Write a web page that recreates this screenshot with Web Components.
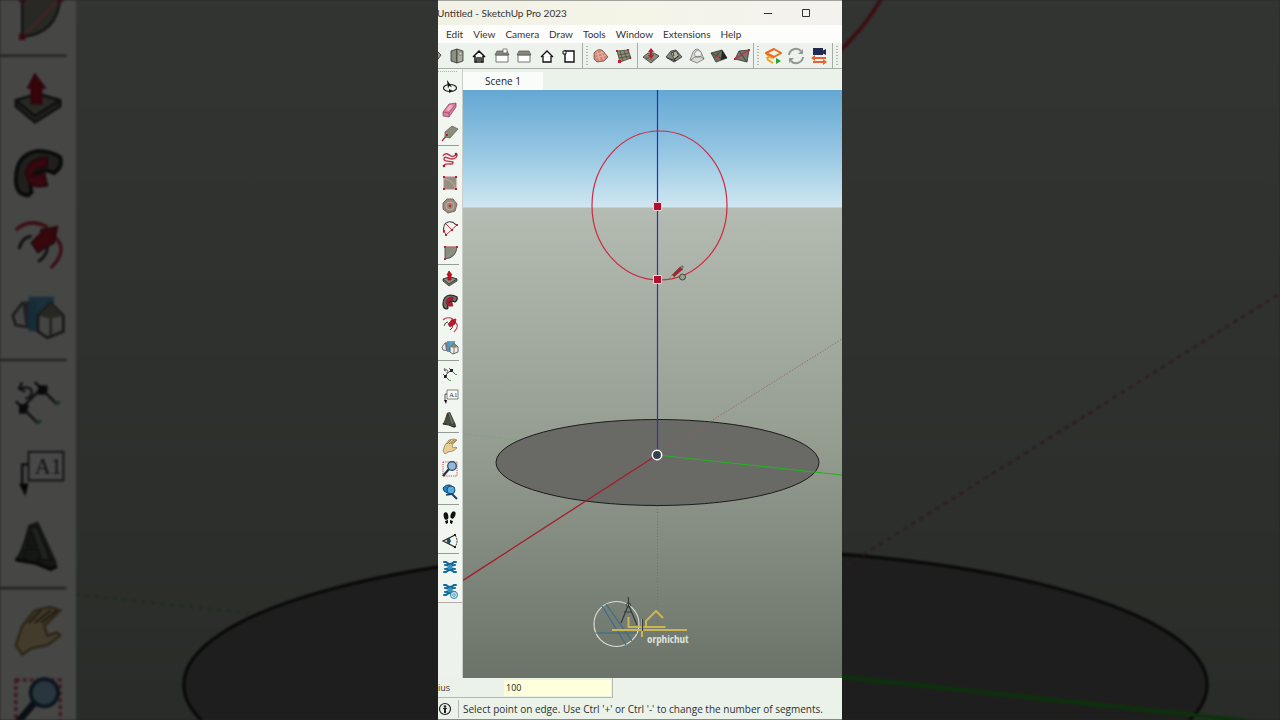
<!DOCTYPE html>
<html lang="en">
<head>
<meta charset="utf-8">
<meta name="viewport" content="width=device-width">
<title>Untitled - SketchUp Pro 2023</title>
<style>
html, body { margin: 0; height: 100%; background: #222; }
</style>
</head>
<body>
<video-frame></video-frame>
<script>
// 18 x 18 drawings shared by the toolbars and the enlarged backdrop.
const K = 'stroke="#333" stroke-width=".8" stroke-linejoin="round"';
const ICONS = {
  iso: `<path ${K} fill="#99998a" d="M2 5l9-2 5 5-5 7-9-3z"/>`,
  top: `<path ${K} fill="#8d9080" d="M3 4l6-2v14l-6-2z"/><path ${K} fill="#a9ac9a" d="M9 2l6 2v10l-6 2z"/><path d="M11 5h3v3h-3z" fill="#d9dccc" stroke="#555" stroke-width=".6"/>`,
  front: `<path d="M3 10l6-6 6 6M5 9v6h2v-4h4v4h2V9" fill="#fff" stroke="#111" stroke-width="1.500"/><path d="M7 10h4v6H7z" fill="#555"/>`,
  right: `<path d="M3 8h12v7H3z" fill="#fff" stroke="#777"/><path d="M2 8l2-4h10l2 4z" fill="#85897a" stroke="#555" stroke-width=".7"/><path d="M10 2h4v4h-4z" fill="#fff" stroke="#555" stroke-width=".7"/>`,
  back: `<path d="M3 8h12v7H3z" fill="#fff" stroke="#777"/><path d="M2 8l2-4h10l2 4z" fill="#85897a" stroke="#555" stroke-width=".7"/>`,
  left: `<path d="M3 10l6-6 6 6M5 9v6h8V9" fill="#fff" stroke="#111" stroke-width="1.300"/>`,
  bottom: `<path d="M5 4h9v11H5z" fill="#fff" stroke="#111" stroke-width="1.400"/><path d="M3 4h3v3H3z" fill="#fff" stroke="#111"/>`,
  contours: `<path d="M2 6c3-4 7-4 9-2l5 6-4 4-7 1-3-3z" fill="#cf8a7c" stroke="#784c44" stroke-width=".8"/><path d="M5 4l3 10M9 4l3 9M3 8l9-3M4 11l10-3" fill="none" stroke="#f1b7a9" stroke-width=".8"/>`,
  scratch: `<path d="M2 4l11-1 3 8-11 4z" fill="#8d8d78" stroke="#45453a" stroke-width=".8"/><path d="M5 4l3 10M9 4l3 8M3 8l11-2M4 11l11-2" stroke="#45453a" stroke-width=".7"/><path d="M1 3h2v2H1zM12 2h2v2h-2zM3 13h3v3H3zM14 10h2v2h-2z" fill="#c51f36"/>`,
  smoove: `<path d="M1 10l5-4h6l5 3-8 7z" fill="#8e8e7c" ${K}/><path d="M4 12l8-5M6 8l6 5M3 10l8 4" stroke="#444" stroke-width=".5"/><path d="M9 1l3 4h-2v3h2l-3 4-3-4h2V5H6z" fill="#c3172e"/>`,
  stamp: `<path d="M1 10l5-6 5-1 6 7-8 5z" fill="#85897a" ${K}/><path d="M6 6l5-2 3 5-5 3z" fill="#b3b7a7" ${K}/><path d="M8 5l1 4M2 11l9 3M9 13l4-4" stroke="#222" stroke-width=".8"/>`,
  drape: `<path d="M2 13l3-8q4-6 8 0l3 7-7 4z" fill="#d9dcd2" stroke="#777" stroke-width=".8"/><circle cx="10" cy="7" r="3.500" fill="#eee" stroke="#888" stroke-width=".8"/><path d="M3 13q7-7 13-1" fill="none" stroke="#666" stroke-width=".8"/>`,
  detail: `<path d="M1 6l11-3 5 8-11 4z" fill="#6e6f61" ${K}/><path d="M12 3l5 8-6 2z" fill="#24241f"/><path d="M1 6l12 6M7 5l4 8M12 3l-8 8" stroke="#333" stroke-width=".6"/><path d="M8 8h2v2H8z" fill="#d33"/>`,
  flip: `<path d="M2 12l4-8 10-1-2 12z" fill="#77766d" ${K}/><path d="M6 4l8 11" stroke="#333" stroke-width=".8"/><path d="M2 12L16 3" stroke="#c8283c" stroke-width="1.200"/><path d="M1 11h2v2H1zM15 2h2v2h-2z" fill="#c51f36"/>`,
  warehouse: `<g fill="none" stroke-width="2" stroke-linejoin="round"><path stroke="#f1a21c" d="M3 10l1 3 5 3M2 6l3 4 5 1"/><path stroke="#ea6a24" d="M2 6l8-4 7 4-7 4z"/></g><path d="M12 11l5 3-5 3z" fill="#23a32b"/>`,
  sync: `<path d="M2 8a7 7 0 0112-4M16 10a7 7 0 01-12 4" fill="none" stroke="#929795" stroke-width="2"/><path d="M16 2v5h-5zM2 16v-5h5z" fill="#929795"/>`,
  live: `<path d="M3 1h10v7H3zM12 4l4-2v6l-4-2z" fill="#222a54"/><path d="M16 10v2H5v2l-4-3 4-3v2zM3 14h10v-2l4 3-4 3v-2H3z" fill="#e8632f"/>`,
  orbit: `<ellipse cx="9" cy="10" rx="6.500" ry="3.500" fill="none" stroke="#222" stroke-width="1.200"/><path d="M6 2l5 7-3-1-1 3zM8 11l4 2-4 2z" fill="#151515"/>`,
  eraser: `<path d="M2 11l6-8 7-1v4l-7 10-6-1z" fill="#df7da0" stroke="#7b4059" stroke-width=".7"/><path d="M2 11l6 1 7-9M8 12v4" fill="none" stroke="#8e4765" stroke-width=".7"/><path d="M5 9l4-5 3 1-4 5z" fill="#f1b3c5"/>`,
  tag: `<path d="M1 17l5-6" stroke="#a32b39" stroke-width="1.200"/><path d="M4 8l7-6 6 3-8 9-5-1z" fill="#8b8d78" stroke="#585a4b" stroke-width=".7"/><path d="M5 10h2v2H5z" fill="#a32b39"/>`,
  freehand: `<path d="M2 5c2-4 5-2 8 0s6-3 6-1-2 4-5 4-8-4-8 0 10 1 9 4-4-1-9 2" fill="none" stroke="#be3348" stroke-width="1.400"/><circle cx="15" cy="3" r="1.300" fill="#a51c31"/><circle cx="3" cy="15" r="1.300" fill="#a51c31"/>`,
  rectangle: `<path d="M3 3h12v12H3z" fill="#91917f" stroke="#c77d83" stroke-width="1"/><path d="M3 5q8 0 12 10" fill="none" stroke="#d8a29f"/><path d="M2 2h2v2H2zM14 2h2v2h-2zM2 14h2v2H2zM14 14h2v2h-2z" fill="#b92238"/>`,
  polygon: `<path d="M6 2h6l4 5-2 7-7 2-5-4V6z" fill="#91917f" stroke="#8e5c5c" stroke-width="1"/><circle cx="9" cy="9" r="4" fill="none" stroke="#d9a19e"/><circle cx="9" cy="9" r="1.400" fill="#c12940"/>`,
  arc: `<path d="M3 13Q1 4 7 2q5-1 8 3" fill="none" stroke="#444" stroke-width="1.100"/><path d="M5 15L16 5M5 4l6 6M3 11l2 4" stroke="#c5344a"/><path d="M4 14h2v2H4zM15 4h2v2h-2zM2 10h2v2H2zM10 9h2v2h-2z" fill="#b92238"/>`,
  pie: `<path d="M4 4h12q-1 11-12 12z" fill="#8b8c7b" stroke="#444" stroke-width=".8"/><path d="M4 16L16 4M4 4h12" stroke="#d37c82"/><path d="M3 3h2v2H3zM15 3h2v2h-2zM3 15h2v2H3z" fill="#b92238"/>`,
  pushpull: `<path d="M2 9l7-2 7 2v2l-8 5-6-5z" fill="#73766a" ${K}/><path d="M2 9l7-2 7 2-8 5z" fill="#8b8e7e" ${K}/><path d="M7 10V5H6l2-4 3 4h-1v5z" fill="#c10d27" stroke="#9b1427" stroke-width=".8"/>`,
  follow: `<path d="M16 4Q13 2 9 2 2 3 2 11q0 5 4 5l1-1q-1-3 1-5 2-3 6-1 3-2 2-5z" fill="#6b7067" stroke="#20231f" stroke-width="1.200"/><path d="M5 9q1-5 7-5v3q-4 0-5 3l4-1 1 4q-4 1-6-1z" fill="#b91830" stroke="#701525" stroke-width=".5"/>`,
  offset: `<path d="M2 4q4-4 10-1M14 6q5 4-1 10" fill="none" stroke="#cb3047" stroke-width="1.100"/><path d="M3 10q1-4 4-4M12 9q0 3-3 5" fill="none" stroke="#3f4640"/><path d="M7 8l3-3V4l5-1-1 5-2 1-3 2z" fill="#c0172f" stroke="#831b2a" stroke-width=".7"/>`,
  solid: `<path d="M1 8l3-4h4v8l-6-1z" fill="#e7e9e3" stroke="#555" stroke-width=".8"/><path d="M4 4l4-1v9l-3-1z" fill="#6b7080"/><path d="M6 2h8v11H6z" fill="#4a9ac4" opacity=".9"/><path d="M9 8l4-4 4 4v5l-5 2-3-2z" fill="#eceee8" stroke="#444" stroke-width=".8"/><path d="M9 8l4-4 4 4-4 1z" fill="#858875"/><path d="M13 9v6" stroke="#555" stroke-width=".7"/>`,
  dimension: `<path d="M2 9l7 7M8 3l7 7M4 11l6-6" stroke="#333" stroke-width=".8"/><path d="M3 10h3v1l-1 2H3zM9 4h3v2l-1 1H9z" fill="#222"/><path d="M4 3L3 5l2 1M3 5q4-1 4 1t-2 2" fill="none" stroke="#333" stroke-width=".7"/><path d="M8 15h2v1H8zM14 9h2v1h-2z" fill="#4ca450"/>`,
  label: `<path d="M6 2h11v9H6z" fill="#f9faf8" stroke="#555" stroke-width=".7"/><text x="8" y="9" font-family="Liberation Serif, serif" font-size="7" fill="#333">A1</text><path d="M6 6H4v6" fill="none" stroke="#333" stroke-width=".8"/><path d="M3 12h3l-1 4z" fill="#111"/>`,
  text3d: `<path d="M6 2l3-1 6 13-1 2-8-3-4 0 2-4z" fill="#4c5147"/><text x="2" y="13" font-family="Liberation Serif, serif" font-weight="bold" font-size="16" fill="#70766a" stroke="#30372f" stroke-width=".6">A</text><path d="M2 13l6 1 5 2 2-1" fill="none" stroke="#222" stroke-width="1.200"/>`,
  pan: `<path d="M2 14l2-6 4-5 5-1 3 1-2 2-3 3 1 3 3-1 1 1-4 3-5 1-3 2z" fill="#e8cf97" stroke="#977f4d" stroke-width=".8"/><path d="M6 7l4-4M8 7l5-4M10 7l5-4" stroke="#6e5d3a" stroke-width=".7"/>`,
  zoomwin: `<path d="M2 2h14v14H2z" fill="none" stroke="#d3415a" stroke-dasharray="1.200 1"/><path d="M8 9l-6 7" stroke="#24333d" stroke-width="2.200"/><circle cx="11" cy="6" r="4.300" fill="#91bad8" stroke="#244963" stroke-width="1.200"/>`,
  zoomext: `<path d="M10 10l6 6" stroke="#173f61" stroke-width="2"/><path d="M2 5q3-4 7-3l3 2v6l-4 1-5-3z" fill="#2781b9" stroke="#164e77"/><circle cx="10" cy="7" r="4" fill="#5aabdb" stroke="#164e77"/><path d="M5 12l7-1" stroke="#173f61" stroke-width="1.500"/>`,
  walk: `<g fill="#111"><ellipse cx="5" cy="7" rx="2.300" ry="3.800" transform="rotate(-10 5 7)"/><ellipse cx="12" cy="6" rx="2.300" ry="3.800" transform="rotate(20 12 6)"/><path d="M4 12l3-1v3l-2 1zM9 11l3 1-1 3-2-1z"/></g>`,
  look: `<path d="M14 3L2 9l12 6" fill="none" stroke="#222" stroke-width="1.100"/><path d="M14 3q4 6 0 12" fill="none" stroke="#222" stroke-dasharray="2 1"/><path d="M8 6q-4 3 0 6 3-3 0-6" fill="#245370" stroke="#1a2b36" stroke-width=".6"/><path d="M13 2h2v2h-2zM13 14h2v2h-2z" fill="#222"/>`,
  sandbox: `<g fill="none" stroke="#146999" stroke-width="2" stroke-linecap="round"><path d="M3 4h2q4 4 8 0h2M3 14h2q4-4 8 0h2M4 7q4 0 4 2t-4 2M14 7q-4 0-4 2t4 2"/></g><path d="M7 7h4v4H7z" fill="#3193c0"/>`,
};
ICONS.sandboxset = ICONS.sandbox + `<circle cx="13" cy="14" r="3.500" fill="#dceaf0" stroke="#2787ae"/><circle cx="13" cy="14" r="1.300" fill="#fff" stroke="#2787ae" stroke-width=".8"/>`;

const SIDE = [
  [['orbit', 'Orbit'], ['eraser', 'Eraser'], ['tag', 'Tag']],
  [['freehand', 'Freehand'], ['rectangle', 'Rectangle'], ['polygon', 'Polygon'], ['arc', 'Arc'], ['pie', 'Pie']],
  [['pushpull', 'Push/Pull'], ['follow', 'Follow Me'], ['offset', 'Offset'], ['solid', 'Outer Shell']],
  [['dimension', 'Dimension'], ['label', 'Text'], ['text3d', '3D Text']],
  [['pan', 'Pan'], ['zoomwin', 'Zoom Window'], ['zoomext', 'Zoom Extents']],
  [['walk', 'Walk'], ['look', 'Look Around']],
  [['sandbox', 'Add Location'], ['sandboxset', 'Location Settings']],
];

// The model view, in the coordinates of the whole recording.
const SCENE = `
<defs>
  <linearGradient id="sky" x1="0" y1="0" x2="0" y2="1"><stop stop-color="#63a7d3"/><stop offset=".55" stop-color="#98c8e3"/><stop offset="1" stop-color="#d0e7f1"/></linearGradient>
  <linearGradient id="ground" x1="0" y1="0" x2="0" y2="1"><stop stop-color="#b4bbb2"/><stop offset=".5" stop-color="#959d91"/><stop offset="1" stop-color="#6b7268"/></linearGradient>
</defs>
<path d="M462 90h380v118H462z" fill="url(#sky)"/>
<path d="M462 207.500h380V679H462z" fill="url(#ground)"/>
<path d="M462 434l195 21" stroke="#5fa05f" stroke-width=".8" stroke-dasharray="1 2"/>
<ellipse cx="657.500" cy="462.500" rx="161.500" ry="43" fill="#696966" stroke="#1c1c1c"/>
<path d="M657 455l185-116" stroke="#95606a" stroke-width=".8" stroke-dasharray="1.500 1.500"/>
<path d="M657.500 506v172" stroke="#6c7086" stroke-dasharray="1 2"/>
<path d="M657 455L462 581" stroke="#a41d2d" stroke-width="1.300"/>
<path d="M657 455l185 20" stroke="#25b025" stroke-width="1.200"/>
<path d="M657.500 90v365" stroke="#2a2ec8" stroke-width="1.200"/>
<ellipse cx="659.500" cy="205.500" rx="67.500" ry="74.500" fill="none" stroke="#cb2b40" stroke-width="1.200"/>
<path d="M653.500 202.500h8v8h-8zM653.500 275.500h8v8h-8z" fill="#b30e2b" stroke="#f1d3d4"/>
<circle cx="657" cy="455" r="4.700" fill="#35404a" stroke="#fff" stroke-width="1.500"/>`;

const LOGO = `
<g fill="none">
  <circle cx="616.500" cy="624" r="22.500" stroke="#d9ddd6" stroke-width="1.200"/>
  <path d="M602 606l24 39M606 604l26 37M595 633h42" stroke="#356d90" stroke-width="1.200"/>
  <path d="M612 630h75M628.500 617v10h37M642 619v18M646 628v-7l10-10 7 7" stroke="#ccb452" stroke-width="2"/>
  <path d="M628.500 597v9M628 606l-7 17M629 606l8 19M624 612h8M642.500 619v12" stroke="#343b38" stroke-width="1.200"/>
  <circle cx="628.500" cy="605" r="2" stroke="#343b38"/>
</g>
<text x="647" y="643" font-family="Liberation Sans Narrow, Open Sans Condensed, Liberation Sans, sans-serif" font-size="11" font-weight="bold" fill="#dfe2dc">orphichut</text>
<g><path d="M670 279l2-4 8-8 3 2-9 8z" fill="#b41d2e" stroke="#514f43" stroke-width=".6"/><path d="M670 279l2-4 2 2z" fill="#d7be7a"/><path d="M680 267l2-2 2 2-2 2z" fill="#777"/><circle cx="682.500" cy="277" r="3" fill="#9aa08f" stroke="#42463c"/></g>`;

function define(name, html, setup) {
  const template = document.createElement('template');
  template.innerHTML = html;
  customElements.define(name, class extends HTMLElement {
    constructor() {
      super();
      this.attachShadow({ mode: 'open' }).append(template.content.cloneNode(true));
    }
    connectedCallback() { if (setup) setup(this, this.shadowRoot); }
  });
}

define('tool-button', `
<style>
:host { display: block; flex: none; width: 18px; }
button { display: block; width: 18px; height: 18px; padding: 0; border: 0; background: none; }
svg { display: block; width: 18px; height: 18px; }
</style>
<button type="button"><svg viewBox="0 0 18 18" aria-hidden="true"></svg></button>`, (host, root) => {
  root.querySelector('svg').innerHTML = ICONS[host.getAttribute('icon')];
  root.querySelector('button').setAttribute('aria-label', host.getAttribute('label'));
});

define('blurred-backdrop', `
<style>
:host { display: block; overflow: hidden; background: #222; }
svg { display: block; width: 100%; height: 100%; filter: blur(1px) brightness(.29); }
</style>
<svg viewBox="438 246 404 228" preserveAspectRatio="xMidYMid slice" aria-hidden="true"></svg>`, (host, root) => {
  let y = 86, icons = '';
  SIDE.forEach((group, i) => {
    if (i) { icons += `<path d="M438 ${y - 10}h21" stroke="#7a7f79" stroke-width=".8"/>`; y += i < 3 ? 4 : 3; }
    group.forEach(([icon]) => {
      icons += `<g transform="translate(441 ${y - 9})">${ICONS[icon]}</g>`;
      y += 23;
    });
  });
  root.querySelector('svg').innerHTML = SCENE + `<path d="M430 70h32v610h-32z" fill="#f0f4ef"/>` + icons;
});

define('title-bar', `
<style>
:host { display: flex; align-items: center; height: 24px; border-top: 1px solid #a3a39d; background: linear-gradient(90deg, #f2f1e6, #f5f4e8 50%, #f4f2ef); color: #333; overflow: hidden; }
h1 { flex: 1; margin: 0 0 0 -1px; font-size: 10px; line-height: 16px; font-weight: 400; white-space: nowrap; }
button { flex: none; width: 38px; height: 24px; padding: 0; border: 0; background: none; }
button:last-of-type { margin-right: 17px; }
svg { display: block; margin: auto; }
</style>
<h1><slot></slot></h1>
<button type="button" aria-label="Minimize"><svg width="10" height="10" viewBox="0 0 10 10"><path d="M1 5.500h8" stroke="#333"/></svg></button>
<button type="button" aria-label="Maximize"><svg width="10" height="10" viewBox="0 0 10 10"><path d="M1.500 1.500h7v7h-7z" fill="none" stroke="#333"/></svg></button>`);

define('menu-bar', `
<style>
:host { display: block; background: #fdfefc; }
nav { display: flex; gap: 10px; height: 18px; padding-left: 8px; overflow: hidden; }
button { padding: 0; border: 0; background: none; color: #333; font: inherit; font-size: 10px; line-height: 18px; white-space: nowrap; }
</style>
<nav></nav>`, (host, root) => {
  root.querySelector('nav').innerHTML = host.getAttribute('items').split(',').map(t => `<button type="button">${t}</button>`).join('');
});

define('main-toolbar', `
<style>
:host { display: grid; grid-template-columns: minmax(0, 145fr) minmax(0, 55fr) minmax(0, 116fr) minmax(0, 79fr) minmax(0, 9fr); height: 25px; border-bottom: 1px solid #a9afa8; background: #edf2ec; overflow: hidden; }
.group { display: flex; box-sizing: border-box; min-width: 0; align-items: center; justify-content: space-between; border-right: 1px solid #a7aca6; }
.grip { background: repeating-linear-gradient(#b0b5af 0 1px, transparent 1px 3px) 3px 3px / 2px 19px no-repeat; }
.views { padding-right: 4px; }
.views tool-button:first-child { margin-left: -13px; }
.terrain { padding: 0 4px 0 9px; }
.shape { padding: 0 2px 0 4px; }
.cloud { padding: 0 4px 0 10px; }
.rest { border: 0; }
</style>
<div class="group views">
<tool-button icon="iso" label="Iso"></tool-button><tool-button icon="top" label="Top"></tool-button><tool-button icon="front" label="Front"></tool-button><tool-button icon="right" label="Right"></tool-button><tool-button icon="back" label="Back"></tool-button><tool-button icon="left" label="Left"></tool-button><tool-button icon="bottom" label="Bottom"></tool-button>
</div>
<div class="group grip terrain">
<tool-button icon="contours" label="From Contours"></tool-button><tool-button icon="scratch" label="From Scratch"></tool-button>
</div>
<div class="group shape">
<tool-button icon="smoove" label="Smoove"></tool-button><tool-button icon="stamp" label="Stamp"></tool-button><tool-button icon="drape" label="Drape"></tool-button><tool-button icon="detail" label="Add Detail"></tool-button><tool-button icon="flip" label="Flip Edge"></tool-button>
</div>
<div class="group grip cloud">
<tool-button icon="warehouse" label="Export"></tool-button><tool-button icon="sync" label="Synchronize"></tool-button><tool-button icon="live" label="Live Link"></tool-button>
</div>
<div class="group grip rest"></div>`);

define('side-toolbar', `
<style>
:host { display: block; flex: none; box-sizing: border-box; width: 25px; background: #edf2ec; border-right: 1px solid #c9cec8; }
.tools { padding: 6px 0 1px; border-bottom: 1px solid #b9a9a9; background: repeating-linear-gradient(90deg, #aaafa9 0 1px, transparent 1px 2px) 0 2px / 20px 1px no-repeat #f2f6f1; }
.group + .group { margin: 1px 3px 0 0; padding-top: 2px; border-top: 1px solid #969b95; }
.group + .group:nth-child(n + 4) { padding-top: 1px; }
tool-button { height: 23px; padding-left: 3px; display: flex; align-items: center; }
</style>
<div class="tools"></div>`, (host, root) => {
  root.querySelector('.tools').innerHTML = SIDE.map(group => `<div class="group">${group.map(([icon, label]) => `<tool-button icon="${icon}" label="${label}"></tool-button>`).join('')}</div>`).join('');
});

define('scene-tabs', `
<style>
:host { display: block; height: 18px; padding-top: 3px; background: #ebf2ea; }
button { display: block; width: 80px; height: 18px; padding: 0; border: 0; background: #fafcf9; color: #222; font-family: "Open Sans", sans-serif; font-size: 10px; line-height: 18px; }
</style>
<button type="button"><slot></slot></button>`);

define('model-view', `
<style>
:host { display: block; min-height: 0; overflow: hidden; }
svg { display: block; width: 100%; height: 100%; }
</style>
<svg viewBox="463 90 379 588" preserveAspectRatio="xMidYMid slice" role="img" aria-label="Model view"></svg>`, (host, root) => {
  root.querySelector('svg').innerHTML = SCENE + LOGO;
});

define('measure-box', `
<style>
:host { display: flex; align-items: center; box-sizing: border-box; height: 20px; background: #ebf2ea; color: #333; }
label { display: flex; align-items: center; justify-content: space-between; box-sizing: border-box; width: 175px; height: 20px; border-right: 1px solid #b4b9b3; border-bottom: 1px solid #b4b9b3; font-family: "Open Sans", sans-serif; font-size: 9px; line-height: 16px; }
input { box-sizing: border-box; width: 107px; height: 16px; margin: 0 1px 0 0; padding: 0 2px; border: 0; background: #ffffdc; color: #222; font: inherit; }
</style>
<label><slot></slot><input type="text" value="100"></label>`);

define('status-bar', `
<style>
:host { display: flex; align-items: center; box-sizing: border-box; height: 22px; border-bottom: 1px solid #858a84; background: #ebf2ea; color: #2d302d; font-family: "Open Sans", sans-serif; font-size: 10px; line-height: 18px; white-space: nowrap; overflow: hidden; }
svg { flex: none; width: 14px; height: 14px; }
p { margin: 0 0 0 6px; padding-left: 4px; border-left: 1px solid #b4b9b3; }
</style>
<svg viewBox="0 0 14 14" aria-hidden="true"><circle cx="7" cy="7" r="5.500" fill="none" stroke="#222" stroke-width="1.200"/><circle cx="7" cy="4.500" r="1.300" fill="#222"/><path d="M5 6h4v1H8v4H6V7H5z" fill="#222"/></svg>
<p><slot></slot></p>`);

define('sketch-app', `
<style>
:host { display: flex; flex-direction: column; min-width: 0; height: 100%; overflow: hidden; background: #ebf2ea; font-family: Lato, "Open Sans", sans-serif; }
.work { display: flex; flex: 1; min-height: 0; }
.stage { display: flex; flex: 1; flex-direction: column; min-width: 0; }
model-view { flex: 1; }
</style>
<title-bar>Untitled - SketchUp Pro 2023</title-bar>
<menu-bar items="Edit,View,Camera,Draw,Tools,Window,Extensions,Help"></menu-bar>
<main-toolbar></main-toolbar>
<div class="work">
  <side-toolbar></side-toolbar>
  <div class="stage"><scene-tabs>Scene 1</scene-tabs><model-view></model-view></div>
</div>
<measure-box>ius</measure-box>
<status-bar>Select point on edge. Use Ctrl '+' or Ctrl '-' to change the number of segments.</status-bar>`);

define('video-frame', `
<style>
:host { display: grid; grid-template: minmax(0, 1fr) / minmax(0, 438fr) minmax(0, 404fr) minmax(0, 438fr); height: 100vh; }
blurred-backdrop { grid-area: 1 / 1 / 2 / 4; }
sketch-app { grid-area: 1 / 2; z-index: 1; }
</style>
<blurred-backdrop></blurred-backdrop>
<sketch-app></sketch-app>`);
</script>
</body>
</html>
